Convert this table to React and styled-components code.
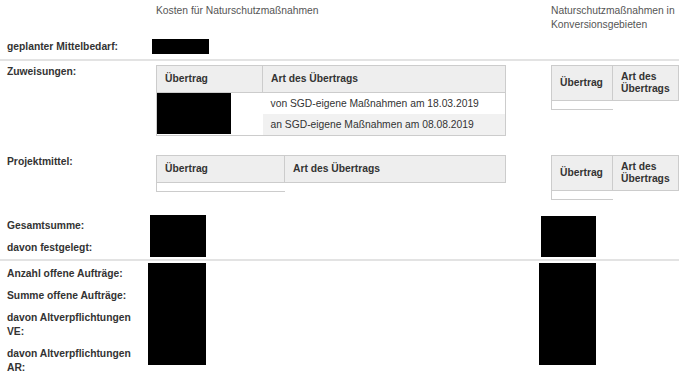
import styled, { createGlobalStyle } from 'styled-components';

const GlobalStyle = createGlobalStyle`
  html, body {
    margin: 0;
    padding: 0;
    background: #fff;
  }
  body {
    font-family: "Liberation Sans", Arial, sans-serif;
    font-size: 10.3px;
    color: #333;
  }
`;

const Page = styled.div`
  width: 700px;
`;

// three columns: labels, main budget, conversion areas
const Row = styled.div`
  display: grid;
  grid-template-columns: 148px 391px 161px;
  align-items: start;
  padding-top: ${(p) => p.$pt || 0}px;
  padding-bottom: ${(p) => p.$pb || 0}px;
`;

const ColumnTitle = styled.div`
  padding: 4px 0 4px ${(p) => p.$indent}px;
  line-height: 14px;
  color: #555;
`;

const Label = styled.div`
  padding: 4px 7px;
  line-height: 14px;
  font-weight: bold;
`;

const LabelStack = styled.div`
  display: flex;
  flex-direction: column;
`;

const Divider = styled.div`
  width: 679px;
  height: 2px;
  margin-top: ${(p) => p.$mt || 0}px;
  background: #e3e3e3;
`;

// black redaction blocks
const Redact = styled.div`
  width: ${(p) => p.$w}px;
  height: ${(p) => p.$h}px;
  margin: ${(p) => p.$mt || 0}px 0 0 ${(p) => p.$ml || 0}px;
  background: #000;
`;

const TableWrap = styled.div`
  margin: 4px 0 0 ${(p) => p.$ml}px;
`;

const Table = styled.table`
  width: ${(p) => p.$w}px;
  border-collapse: collapse;
  border: ${(p) => (p.$framed ? '1px solid #ccc' : 'none')};
  table-layout: fixed;
`;

// $w is the full column width, padding and border included
const Th = styled.th`
  width: ${(p) => (p.$w ? `${p.$w - 17}px` : 'auto')};
  height: 16px;
  padding: 5px 8px;
  border: 1px solid #ccc;
  background: #eee;
  font-weight: bold;
  line-height: 12px;
  text-align: left;
  vertical-align: middle;
`;

const Tr = styled.tr`
  background: ${(p) => (p.$striped ? '#f1f1f1' : '#fff')};
`;

const Td = styled.td`
  padding: 4px 8px;
  line-height: 13px;
  vertical-align: top;
  white-space: nowrap;
`;

const RedactCell = styled.td`
  padding: 0;
  vertical-align: top;
  background: #fff;
`;

const EmptyCell = styled.td`
  height: 0;
  padding: 4px 0;
  border-left: 1px solid #ccc;
  border-bottom: 1px solid #ccc;
`;

function EmptyTable({ width, first }) {
  return (
    <Table $w={width}>
      <thead>
        <tr>
          <Th $w={first}>Übertrag</Th>
          <Th>Art des Übertrags</Th>
        </tr>
      </thead>
      <tbody>
        <tr>
          <EmptyCell />
        </tr>
      </tbody>
    </Table>
  );
}

export default function App() {
  return (
    <Page>
      <GlobalStyle />
      <Row>
        <div />
        <ColumnTitle $indent={8}>Kosten für Naturschutzmaßnahmen</ColumnTitle>
        <ColumnTitle $indent={12}>Naturschutzmaßnahmen in Konversionsgebieten</ColumnTitle>
      </Row>

      <Row>
        <Label>geplanter Mittelbedarf:</Label>
        <Redact $w={57} $h={15} $mt={3} $ml={4} />
        <div />
      </Row>
      <Divider $mt={1} />

      <Row $pb={15}>
        <Label>Zuweisungen:</Label>
        <TableWrap $ml={8}>
          <Table $w={350} $framed>
            <thead>
              <tr>
                <Th $w={106}>Übertrag</Th>
                <Th>Art des Übertrags</Th>
              </tr>
            </thead>
            <tbody>
              <Tr>
                <RedactCell><Redact $w={74} $h={21} /></RedactCell>
                <Td>von SGD-eigene Maßnahmen am 18.03.2019</Td>
              </Tr>
              <Tr $striped>
                <RedactCell><Redact $w={74} $h={20} /></RedactCell>
                <Td>an SGD-eigene Maßnahmen am 08.08.2019</Td>
              </Tr>
            </tbody>
          </Table>
        </TableWrap>
        <TableWrap $ml={12}>
          <EmptyTable width={128} first={61} />
        </TableWrap>
      </Row>

      <Row $pb={15}>
        <Label>Projektmittel:</Label>
        <TableWrap $ml={8}>
          <EmptyTable width={350} first={128} />
        </TableWrap>
        <TableWrap $ml={12}>
          <EmptyTable width={128} first={61} />
        </TableWrap>
      </Row>

      <Row>
        <LabelStack>
          <Label>Gesamtsumme:</Label>
          <Label>davon festgelegt:</Label>
        </LabelStack>
        <Redact $w={56} $h={42} $ml={2} />
        <Redact $w={55} $h={41} $ml={2} $mt={1} />
      </Row>
      <Divider $mt={0} />

      <Row $pt={2}>
        <LabelStack>
          <Label>Anzahl offene Aufträge:</Label>
          <Label>Summe offene Aufträge:</Label>
          <Label>davon Altverpflichtungen VE:</Label>
          <Label>davon Altverpflichtungen AR:</Label>
        </LabelStack>
        <Redact $w={58} $h={102} />
        <Redact $w={57} $h={102} />
      </Row>
    </Page>
  );
}
